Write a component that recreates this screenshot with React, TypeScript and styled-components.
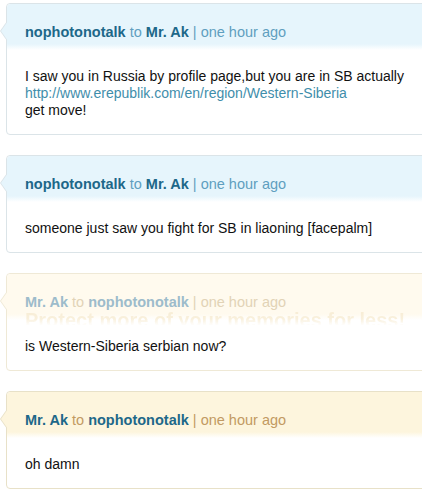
import React from "react";
import styled, { createGlobalStyle, css } from "styled-components";

type Tone = "blue" | "yellow" | "faded";

const palette = {
  blue: {
    band: "#e6f5fc",
    border: "#dbe4e8",
    name: "#1d6889",
    soft: "#5f9fbf",
  },
  yellow: {
    band: "#fdf5dd",
    border: "#e8e1c8",
    name: "#1d6889",
    soft: "#c29a62",
  },
  faded: {
    band: "#fffaee",
    border: "#efe9d6",
    name: "#9dbccb",
    soft: "#e2d3b6",
  },
};

const messages: {
  tone: Tone;
  from: string;
  to: string;
  lines: { text: string; link?: boolean }[];
  watermark?: boolean;
}[] = [
  {
    tone: "blue",
    from: "nophotonotalk",
    to: "Mr. Ak",
    lines: [
      { text: "I saw you in Russia by profile page,but you are in SB actually" },
      { text: "http://www.erepublik.com/en/region/Western-Siberia", link: true },
      { text: "get move!" },
    ],
  },
  {
    tone: "blue",
    from: "nophotonotalk",
    to: "Mr. Ak",
    lines: [{ text: "someone just saw you fight for SB in liaoning [facepalm]" }],
  },
  {
    tone: "faded",
    from: "Mr. Ak",
    to: "nophotonotalk",
    lines: [{ text: "is Western-Siberia serbian now?" }],
    watermark: true,
  },
  {
    tone: "yellow",
    from: "Mr. Ak",
    to: "nophotonotalk",
    lines: [{ text: "oh damn" }],
  },
];

const App = () => {
  return (
    <>
      <GlobalStyle />
      <Page>
        {messages.map((m, i) => (
          <Card key={i} tone={m.tone}>
            <Header tone={m.tone}>
              <Name tone={m.tone}>{m.from}</Name>
              <Soft tone={m.tone}> to </Soft>
              <Name tone={m.tone}>{m.to}</Name>
              <Soft tone={m.tone}> | one hour ago</Soft>
            </Header>
            <Body>
              {m.lines.map((l, j) =>
                l.link ? (
                  <LinkLine key={j} href="#">
                    {l.text}
                  </LinkLine>
                ) : (
                  <Line key={j}>{l.text}</Line>
                )
              )}
            </Body>
            {m.watermark && (
              <Watermark>Protect more of your memories for less!</Watermark>
            )}
          </Card>
        ))}
      </Page>
    </>
  );
};

export default App;

const GlobalStyle = createGlobalStyle`
  body {
    margin: 0;
    background: #ffffff;
    overflow: hidden;
    font-family: "Liberation Sans", Arial, sans-serif;
  }
`;

const Page = styled.div`
  display: flex;
  flex-direction: column;
  gap: 20px;
  padding: 3px 0 0 6px;
  width: calc(100% + 10px);
  box-sizing: border-box;
`;

const Card = styled.div<{ tone: Tone }>`
  position: relative;
  border: 1px solid ${(p) => palette[p.tone].border};
  border-radius: 4px;
  background: #ffffff;

  &::before,
  &::after {
    content: "";
    position: absolute;
    top: 17px;
    width: 0;
    height: 0;
    border-style: solid;
  }
  &::before {
    left: -7px;
    border-width: 10px 7px 10px 0;
    border-color: transparent ${(p) => palette[p.tone].border} transparent
      transparent;
  }
  &::after {
    left: -6px;
    border-width: 10px 7px 10px 0;
    border-color: transparent ${(p) => palette[p.tone].band} transparent
      transparent;
  }
`;

const Header = styled.div<{ tone: Tone }>`
  height: 46px;
  box-sizing: border-box;
  padding: 19px 18px 0;
  border-radius: 4px 4px 0 0;
  background: linear-gradient(
    to bottom,
    ${(p) => palette[p.tone].band} 0,
    ${(p) => palette[p.tone].band} 40px,
    #ffffff 46px
  );
  font-size: 14.5px;
  line-height: 18px;
  white-space: nowrap;
`;

const Name = styled.span<{ tone: Tone }>`
  font-weight: bold;
  color: ${(p) => palette[p.tone].name};
`;

const Soft = styled.span<{ tone: Tone }>`
  color: ${(p) => palette[p.tone].soft};
`;

const Watermark = styled.span`
  position: absolute;
  left: 18px;
  top: 35px;
  font-size: 20px;
  line-height: 22px;
  font-weight: bold;
  white-space: nowrap;
  pointer-events: none;
  color: transparent;
  background: linear-gradient(
    to bottom,
    #f7ecd3 0,
    #f9f0dc 45%,
    rgba(255, 255, 255, 0) 75%
  );
  -webkit-background-clip: text;
  background-clip: text;
`;

const Body = styled.div`
  display: flex;
  flex-direction: column;
  padding: 18px 18px 15px;
  font-size: 14px;
  line-height: 17px;
  color: #111111;
`;

const lineText = css`
  white-space: nowrap;
`;

const Line = styled.span`
  ${lineText}
`;

const LinkLine = styled.a`
  ${lineText}
  color: #3f8eab;
  text-decoration: none;
`;
